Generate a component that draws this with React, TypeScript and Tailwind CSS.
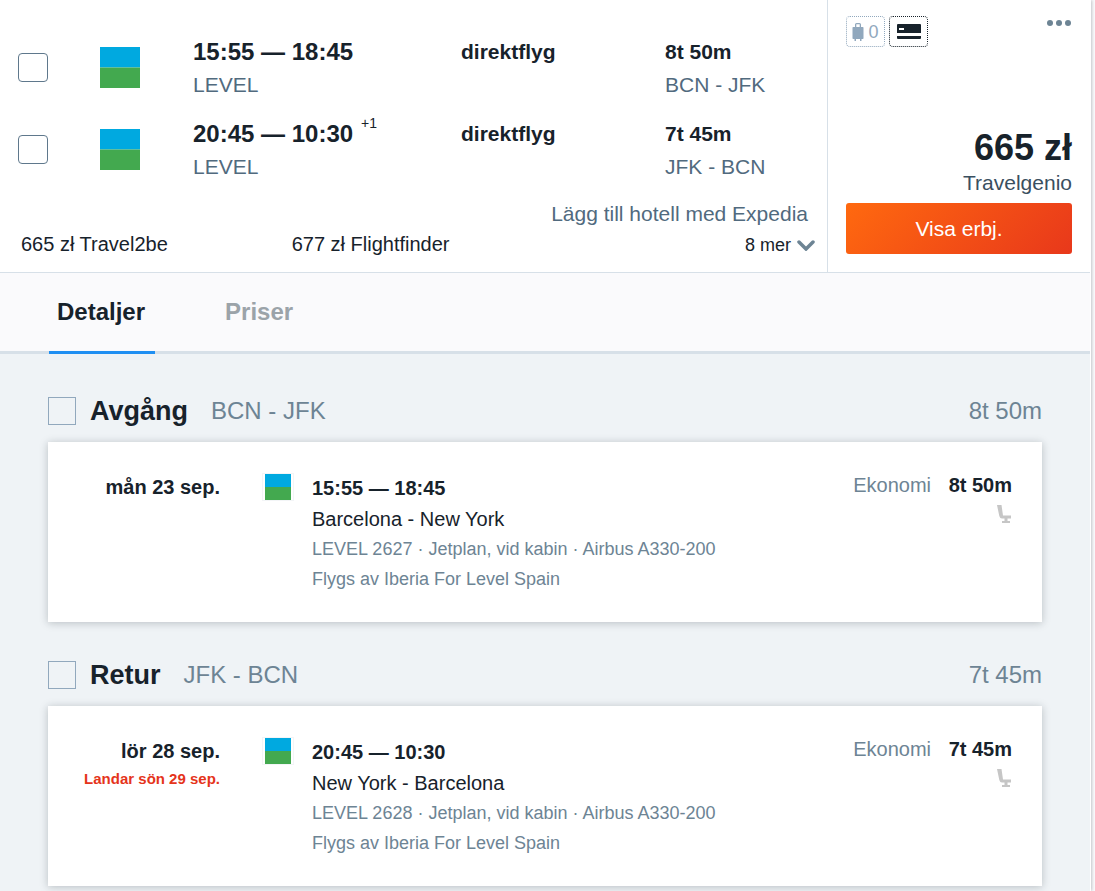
import { useState } from "react";
import { clsx } from "clsx";

type Leg = {
  title: string;
  date: string;
  landing?: string;
  times: string;
  nextDay?: string;
  route: string;
  cities: string;
  duration: string;
  flight: string;
  operator: string;
};

const legs: Leg[] = [
  {
    title: "Avgång",
    date: "mån 23 sep.",
    times: "15:55 — 18:45",
    route: "BCN - JFK",
    cities: "Barcelona - New York",
    duration: "8t 50m",
    flight: "LEVEL 2627 · Jetplan, vid kabin · Airbus A330-200",
    operator: "Flygs av Iberia For Level Spain",
  },
  {
    title: "Retur",
    date: "lör 28 sep.",
    landing: "Landar sön 29 sep.",
    times: "20:45 — 10:30",
    nextDay: "+1",
    route: "JFK - BCN",
    cities: "New York - Barcelona",
    duration: "7t 45m",
    flight: "LEVEL 2628 · Jetplan, vid kabin · Airbus A330-200",
    operator: "Flygs av Iberia For Level Spain",
  },
];

const tabs = ["Detaljer", "Priser"];

function AirlineLogo({ className }: { className: string }) {
  return (
    <svg viewBox="0 0 40 40" preserveAspectRatio="none" className={className} role="img" aria-label="LEVEL">
      <rect width="40" height="20" fill="#00a9e0" />
      <rect y="20" width="40" height="20" fill="#43a94f" />
    </svg>
  );
}

function BagIcon() {
  return (
    <svg viewBox="0 0 12 18" className="h-[18px] w-3" fill="#91a8bd">
      <path d="M3 4V1.500Q3 0 4.500 0h3Q9 0 9 1.500V4H7.700V1.300H4.300V4Z" />
      <rect x="0.500" y="4" width="11" height="12" rx="0.800" />
      <rect x="2.500" y="16" width="1.500" height="2" />
      <rect x="8" y="16" width="1.500" height="2" />
    </svg>
  );
}

function CardIcon() {
  return (
    <svg viewBox="0 0 24 15" className="h-[15px] w-6">
      <path fill="#17222b" d="M1 0h22q1 0 1 1v8H0V1q0-1 1-1Z" />
      <rect x="2" y="4" width="5" height="2" fill="#fff" />
      <path fill="#17222b" d="M0 12h24v2q0 1-1 1H1q-1 0-1-1Z" />
    </svg>
  );
}

function SeatIcon() {
  return (
    <svg viewBox="0 0 14 18" className="h-[18px] w-3.5" fill="#c6c6c6">
      <path d="M0 0h4.500l1.500 10.500h8V13.500h-3.500v2.500H13v2H5v-2h2.500v-2.500H5Q3 13.500 2.300 11Z" />
    </svg>
  );
}

function LegSummary({ leg }: { leg: Leg }) {
  return (
    <div className="grid grid-cols-[82px_93px_268fr_204fr_162fr] items-center">
      <input
        type="checkbox"
        aria-label={leg.route}
        className="h-[29px] w-[30px] appearance-none rounded border border-[#5f788c] bg-white checked:bg-[#1f8ff2]"
      />
      <AirlineLogo className="h-[41px] w-10" />
      <div>
        <p className="text-2xl leading-[35px] font-bold">
          {leg.times}
          {leg.nextDay && <sup className="top-[-14px] ml-2 text-[14px] leading-none font-normal">{leg.nextDay}</sup>}
        </p>
        <p className="leading-[31px] text-[#516a7e]">LEVEL</p>
      </div>
      <p className="self-start leading-[35px] font-bold">direktflyg</p>
      <div>
        <p className="leading-[35px] font-bold">{leg.duration}</p>
        <p className="leading-[31px] text-[#516a7e]">{leg.route}</p>
      </div>
    </div>
  );
}

function LegDetails({ leg }: { leg: Leg }) {
  return (
    <section>
      <div className="mb-[13px] flex h-9 items-center">
        <label className="flex items-center">
          <input
            type="checkbox"
            className="mr-3.5 size-7 appearance-none border border-[#91a8bd] checked:bg-[#1f8ff2]"
          />
          <h2 className="text-[27px] font-bold">{leg.title}</h2>
        </label>
        <span className="ml-[23px] text-2xl text-[#6d8494]">{leg.route}</span>
        <span className="ml-auto text-2xl text-[#6d8494]">{leg.duration}</span>
      </div>
      <div className="flex min-h-[180px] bg-white pt-[30px] pr-[30px] pb-7 shadow-[0_1px_8px_rgba(23,34,43,0.25)]">
        <div className="w-[172px] text-right">
          <p className="text-xl leading-[30px] font-bold">{leg.date}</p>
          {leg.landing && <p className="text-[15px] leading-[26px] font-bold text-[#e5341b]">{leg.landing}</p>}
        </div>
        <div className="mt-px ml-[42px] flex h-7 w-8 items-center justify-center border border-[#f3f5f7]">
          <AirlineLogo className="size-[26px]" />
        </div>
        <div className="ml-[18px] flex-1 text-lg leading-[30px] text-[#6d8494]">
          <p className="text-xl leading-8 font-bold text-[#17222b]">{leg.times}</p>
          <p className="text-xl leading-[30px] text-[#17222b]">{leg.cities}</p>
          <p>{leg.flight}</p>
          <p>{leg.operator}</p>
        </div>
        <div className="flex flex-col items-end">
          <p className="text-xl leading-[27px] text-[#6d8494]">
            Ekonomi <b className="ml-3 text-[#17222b]">{leg.duration}</b>
          </p>
          <div className="mt-1.5 pr-px">
            <SeatIcon />
          </div>
        </div>
      </div>
    </section>
  );
}

function App() {
  const [tab, setTab] = useState("Detaljer");

  return (
    <div className="min-h-screen bg-[#fafafc] pr-1 font-['Liberation_Sans',Arial,sans-serif] text-[21px] text-[#17222b]">
      <div className="min-h-screen border-r border-white bg-[#eff3f6] shadow-[1px_0_3px_rgba(23,34,43,0.25)]">
        <div className="flex border-b border-[#d7e0e8] bg-white">
          <div className="flex-1 pt-[34px] pb-3">
            <div className="flex flex-col gap-4 pl-[18px]">
              {legs.map((leg) => (
                <LegSummary key={leg.title} leg={leg} />
              ))}
            </div>
            <div className="mt-4 flex justify-end pr-[19px] leading-8">
              <a href="#hotell" className="text-[#516a7e]">Lägg till hotell med Expedia</a>
            </div>
            <div className="grid grid-cols-[271fr_300fr_224fr] pr-3 pl-[21px] text-xl leading-[29px]">
              <a href="#travel2be">665 zł Travel2be</a>
              <a href="#flightfinder">677 zł Flightfinder</a>
              <button className="flex items-center justify-end gap-1.5 text-lg leading-[30px]">
                8 mer
                <svg viewBox="0 0 18 11" className="h-[11px] w-[18px]" fill="none" stroke="#6d8494" strokeWidth="3.500" strokeLinecap="round">
                  <path d="M2 2l7 7 7-7" />
                </svg>
              </button>
            </div>
          </div>
          <div className="flex w-[263px] flex-col border-l border-[#d7e0e8] px-[18px] pt-4 pb-[18px]">
            <div className="flex items-start gap-1">
              <div className="flex h-[31px] w-[39px] items-center justify-center gap-1 rounded border border-dotted border-[#91a8bd] text-lg text-[#91a8bd]">
                <BagIcon />0
              </div>
              <div className="flex h-[31px] w-[39px] items-center justify-center rounded border border-dotted border-[#17222b]">
                <CardIcon />
              </div>
              <button className="ml-auto pt-1" aria-label="Mer">
                <svg viewBox="0 0 26 6" className="h-1.5 w-[26px]" fill="#6d8494">
                  <circle cx="4" cy="3" r="3" />
                  <circle cx="13" cy="3" r="3" />
                  <circle cx="22" cy="3" r="3" />
                </svg>
              </button>
            </div>
            <div className="mt-auto text-right">
              <p className="text-4xl leading-10 font-bold">665 zł</p>
              <p className="leading-[30px] text-[#3a4f5f]">Travelgenio</p>
            </div>
            <button className="mt-[5px] h-[51px] rounded-[3px] bg-linear-[135deg] from-[#ff690f] to-[#e8381b] text-white">
              Visa erbj.
            </button>
          </div>
        </div>

        <div className="flex gap-[62px] border-b-[3px] border-[#d7e0e8] bg-[#fafafc] px-[49px]" role="tablist">
          {tabs.map((name) => (
            <button
              key={name}
              role="tab"
              aria-selected={tab === name}
              onClick={() => setTab(name)}
              className={clsx(
                "-mb-[3px] h-[81px] border-b-[3px] pr-2.5 pl-2 text-2xl font-bold",
                tab === name ? "border-[#1f8ff2]" : "border-transparent text-[#9ba3a9]"
              )}
            >
              {name}
            </button>
          ))}
        </div>

        <div className="flex flex-col gap-[35px] px-12 pt-[39px] pb-[5px]">
          {legs.map((leg) => (
            <LegDetails key={leg.title} leg={leg} />
          ))}
        </div>
      </div>
    </div>
  );
}

export default App;
